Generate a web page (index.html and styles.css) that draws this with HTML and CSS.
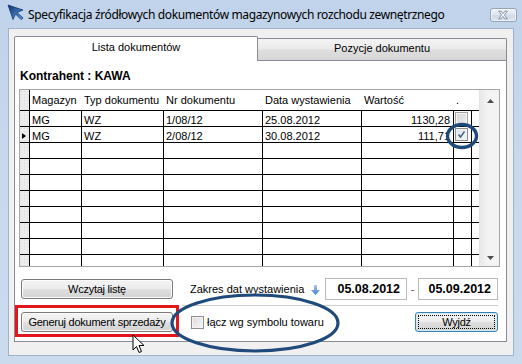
FILE: index.html
```html
<!DOCTYPE html>
<html lang="pl">
<head>
<meta charset="utf-8">
<title>Specyfikacja</title>
<link rel="stylesheet" href="styles.css">
</head>
<body>
<div class="window">
  <div class="titlebar">
    <svg class="app-icon" viewBox="0 0 17 16" width="17" height="16">
      <defs>
        <linearGradient id="ig" x1="0" y1="0" x2="1" y2="1">
          <stop offset="0" stop-color="#0f2f6e"/>
          <stop offset="1" stop-color="#5aa0e0"/>
        </linearGradient>
      </defs>
      <path d="M1 1 L16 6 L10 8.5 L16 14 L14 15.5 L8.5 10 L6 15.5 Z" fill="url(#ig)" stroke="#17386f" stroke-width="0.8"/>
    </svg>
    <span class="title">Specyfikacja źródłowych dokumentów magazynowych rozchodu zewnętrznego</span>
    <div class="close">
      <svg viewBox="0 0 27 14" width="27" height="14">
        <path d="M9 3 L11.5 3 L13.5 5.5 L15.5 3 L18 3 L15 7 L18 11 L15.5 11 L13.5 8.5 L11.5 11 L9 11 L12 7 Z" fill="#f4f7fb" stroke="#7b8796" stroke-width="0.9"/>
      </svg>
    </div>
  </div>
  <div class="client">
    <div class="tabs">
      <div class="tab tab-active">Lista dokumentów</div>
      <div class="tab tab-inactive">Pozycje dokumentu</div>
    </div>
    <div class="panel">
      <div class="kontrahent">Kontrahent : KAWA</div>
      <div class="grid">
        <div class="grid-body">
          <div class="row head">
            <div class="cell ind"></div>
            <div class="cell">Magazyn</div>
            <div class="cell">Typ dokumentu</div>
            <div class="cell">Nr dokumentu</div>
            <div class="cell">Data wystawienia</div>
            <div class="cell">Wartość</div>
            <div class="cell">.</div>
            <div class="cell last"></div>
          </div>
          <div class="row">
            <div class="cell ind"></div>
            <div class="cell">MG</div>
            <div class="cell">WZ</div>
            <div class="cell">1/08/12</div>
            <div class="cell">25.08.2012</div>
            <div class="cell num">1130,28</div>
            <div class="cell chk"><span class="cb cb-gray"></span></div>
            <div class="cell last"></div>
          </div>
          <div class="row">
            <div class="cell ind"><span class="pointer"></span></div>
            <div class="cell">MG</div>
            <div class="cell">WZ</div>
            <div class="cell">2/08/12</div>
            <div class="cell">30.08.2012</div>
            <div class="cell num">111,71</div>
            <div class="cell chk"><span class="cb cb-checked"><svg viewBox="0 0 11 11" width="11" height="11"><path d="M2.5 5.5 L4.5 8 L8.5 2.5" fill="none" stroke="#4a5f7a" stroke-width="1.4"/></svg></span></div>
            <div class="cell last"></div>
          </div>
          <div class="row"><div class="cell ind"></div><div class="cell"></div><div class="cell"></div><div class="cell"></div><div class="cell"></div><div class="cell"></div><div class="cell"></div><div class="cell last"></div></div>
          <div class="row"><div class="cell ind"></div><div class="cell"></div><div class="cell"></div><div class="cell"></div><div class="cell"></div><div class="cell"></div><div class="cell"></div><div class="cell last"></div></div>
          <div class="row"><div class="cell ind"></div><div class="cell"></div><div class="cell"></div><div class="cell"></div><div class="cell"></div><div class="cell"></div><div class="cell"></div><div class="cell last"></div></div>
          <div class="row"><div class="cell ind"></div><div class="cell"></div><div class="cell"></div><div class="cell"></div><div class="cell"></div><div class="cell"></div><div class="cell"></div><div class="cell last"></div></div>
          <div class="row"><div class="cell ind"></div><div class="cell"></div><div class="cell"></div><div class="cell"></div><div class="cell"></div><div class="cell"></div><div class="cell"></div><div class="cell last"></div></div>
          <div class="row"><div class="cell ind"></div><div class="cell"></div><div class="cell"></div><div class="cell"></div><div class="cell"></div><div class="cell"></div><div class="cell"></div><div class="cell last"></div></div>
          <div class="row"><div class="cell ind"></div><div class="cell"></div><div class="cell"></div><div class="cell"></div><div class="cell"></div><div class="cell"></div><div class="cell"></div><div class="cell last"></div></div>
          <div class="row"><div class="cell ind"></div><div class="cell"></div><div class="cell"></div><div class="cell"></div><div class="cell"></div><div class="cell"></div><div class="cell"></div><div class="cell last"></div></div>
        </div>
        <div class="scrollbar">
          <svg class="sb-arrow" viewBox="0 0 7 4" width="7" height="4"><path d="M0 4 L3.5 0 L7 4 Z" fill="#4d4d4d"/></svg>
          <svg class="sb-arrow" viewBox="0 0 7 4" width="7" height="4"><path d="M0 0 L3.5 4 L7 0 Z" fill="#4d4d4d"/></svg>
        </div>
      </div>
      <div class="range-row">
        <div class="btn btn-load">Wczytaj listę</div>
        <div class="range-label">Zakres dat wystawienia</div>
        <svg class="down-arrow" viewBox="0 0 9 10" width="9" height="10">
          <defs>
            <linearGradient id="ag" x1="0" y1="0" x2="0" y2="1">
              <stop offset="0" stop-color="#a9c8ec"/>
              <stop offset="1" stop-color="#3f7fcf"/>
            </linearGradient>
          </defs>
          <path d="M3 0 L6 0 L6 5 L9 5 L4.5 10 L0 5 L3 5 Z" fill="url(#ag)"/>
        </svg>
        <div class="datebox date1">05.08.2012</div>
        <div class="dash">-</div>
        <div class="datebox date2">05.09.2012</div>
      </div>
      <div class="sep"></div>
      <div class="action-row">
        <div class="btn btn-gen">Generuj dokument sprzedaży</div>
        <span class="cb cb-plain"></span>
        <span class="cb-label">łącz wg symbolu towaru</span>
        <div class="btn btn-exit"><span class="focus">Wyjdź</span></div>
      </div>
    </div>
  </div>

  <div class="red-box"></div>
  <svg class="ellipse-big" width="176" height="70" viewBox="0 0 176 70">
    <ellipse cx="88" cy="34" rx="83" ry="28" fill="none" stroke="#1f4a7c" stroke-width="3.2"/>
  </svg>
  <svg class="ellipse-small" width="36" height="30" viewBox="0 0 36 30">
    <ellipse cx="18" cy="15" rx="14.5" ry="11.5" fill="none" stroke="#1f4a7c" stroke-width="3.4"/>
  </svg>
  <svg class="cursor" width="14" height="21" viewBox="0 0 14 21">
    <path d="M1 1 L1 16 L4.5 12.5 L7 18.5 L9.5 17.5 L7 11.5 L12 11.5 Z" fill="#fff" stroke="#000" stroke-width="1" stroke-linejoin="miter"/>
  </svg>
</div>
</body>
</html>
```

FILE: styles.css
```css
* { box-sizing: border-box; }
html, body { margin: 0; padding: 0; }
body {
  width: 522px;
  height: 364px;
  overflow: hidden;
  font-family: "Liberation Sans", Arial, sans-serif;
  font-size: 11px;
  color: #000;
  background: #c4d6ec;
}

.window {
  position: relative;
  width: 522px;
  height: 364px;
  background: linear-gradient(180deg, #c0d3ea 0%, #c7d8ed 40%, #cbdbee 100%);
  display: flex;
  flex-direction: column;
}

/* title bar */
.titlebar {
  height: 28px;
  flex: none;
  display: flex;
  align-items: flex-start;
  padding-left: 7px;
}
.app-icon { flex: none; margin-top: 4px; }
.title {
  font-family: "Noto Sans", "DejaVu Sans", sans-serif;
  font-size: 12px;
  letter-spacing: -0.37px;
  line-height: 16px;
  margin-left: 4px;
  margin-top: 7px;
  white-space: nowrap;
  color: #000;
}
.close {
  margin-left: auto;
  margin-right: 5px;
  margin-top: 8px;
  width: 27px;
  height: 14px;
  border: 1px solid #93a4b8;
  border-radius: 3px;
  background: linear-gradient(180deg, #eef3f9 0%, #dbe5f1 50%, #cfdbea 51%, #d8e3ef 100%);
  box-shadow: inset 0 0 0 1px rgba(255,255,255,0.6);
  display: flex;
}
.close svg { margin: -1px 0 0 -1px; }

/* client */
.client {
  flex: 1;
  margin: 0 8px 8px 8px;
  background: #f0f0f0;
  border: 1px solid #9fb2c8;
  padding: 7px 6px 0 5px;
  display: flex;
  flex-direction: column;
}

.tabs {
  height: 24px;
  display: flex;
  align-items: flex-end;
  flex: none;
}
.tab {
  border: 1px solid #898c95;
  border-bottom: none;
  text-align: center;
  line-height: 14px;
  white-space: nowrap;
}
.tab-active {
  width: 244px;
  height: 25px;
  margin-bottom: -1px;
  padding-top: 3px;
  background: #fff;
  position: relative;
  z-index: 1;
  border-radius: 2px 2px 0 0;
}
.tab-inactive {
  width: 249px;
  height: 22px;
  padding-top: 2px;
  border-left: none;
  border-radius: 0 2px 0 0;
  background: linear-gradient(180deg, #f3f3f3 0%, #ebebeb 45%, #dedede 55%, #d6d6d6 100%);
}

.panel {
  width: 493px;
  height: 282px;
  border: 1px solid #898c95;
  background: #fff;
  padding: 8px 0 0 4px;
  display: flex;
  flex-direction: column;
  flex: none;
}

.kontrahent {
  font-weight: bold;
  font-size: 12px;
  line-height: 14px;
  height: 14px;
  margin-left: 1px;
}

/* grid */
.grid {
  margin-top: 6px;
  width: 481px;
  height: 178px;
  border: 1px solid #a5a5a5;
  display: flex;
  flex: none;
}
.grid-body {
  width: 459px;
  height: 176px;
  overflow: hidden;
}
.row {
  display: grid;
  grid-template-columns: 10px 52px 82px 99px 99px 92px 18px 7px;
  height: 16px;
  border-bottom: 1px solid #000;
}
.row.head { height: 21px; }
.cell {
  border-right: 1px solid #000;
  padding: 2px 0 0 2px;
  line-height: 15px;
  white-space: nowrap;
  overflow: hidden;
}
.cell.last { border-right: none; }
.cell.ind {
  background-color: #ececec;
  background-image: radial-gradient(#dcdcdc 0.6px, transparent 0.7px);
  background-size: 3px 3px;
  padding: 0;
  display: flex;
  align-items: center;
}
.head .cell { border-right: none; padding-top: 0; line-height: 20px; }
.head .cell.ind { border-right: 1px solid #000; }
.cell.num { text-align: right; padding-right: 3px; padding-left: 0; }
.cell.chk { padding: 1px 0 0 1px; }
.pointer {
  width: 0;
  height: 0;
  border-top: 3.5px solid transparent;
  border-bottom: 3.5px solid transparent;
  border-left: 4px solid #000;
  margin: 2px 0 0 2px;
}

.cb {
  display: inline-block;
  width: 13px;
  height: 13px;
  border: 1px solid #8f8f8f;
  flex: none;
}
.cb-gray {
  background: linear-gradient(135deg, #d6d6d6, #ececec);
  border-color: #a3a3a3;
  box-shadow: inset 0 0 0 1px #f3f3f3;
}
.cb-checked {
  background: linear-gradient(135deg, #dbe4ee, #f4f7fa);
  box-shadow: inset 0 0 0 1px #f0f0f0;
}
.cb-checked svg { display: block; margin: 0; }
.cb-plain {
  background: linear-gradient(135deg, #dcdcdc, #f7f7f7);
  box-shadow: inset 0 0 0 1px #f4f4f4;
  margin-left: 18px;
}

.scrollbar {
  width: 20px;
  height: 176px;
  background: linear-gradient(90deg, #e8e8e8 0%, #f3f3f3 40%, #f3f3f3 100%);
  border-left: 1px solid #e4e4e4;
  display: flex;
  flex-direction: column;
  justify-content: space-between;
  align-items: center;
  padding: 9px 0 6px 1px;
}
.sb-arrow { display: block; }

/* range row */
.range-row {
  margin-top: 11px;
  height: 22px;
  display: flex;
  align-items: center;
  flex: none;
}
.btn {
  height: 20px;
  border: 1px solid #7a7a7a;
  border-radius: 3px;
  background: linear-gradient(180deg, #f4f4f4 0%, #ececec 48%, #dfdfdf 52%, #d3d3d3 100%);
  box-shadow: inset 0 0 0 1px #fbfbfb;
  display: flex;
  align-items: center;
  justify-content: center;
  font-size: 11px;
  letter-spacing: -0.25px;
  white-space: nowrap;
  flex: none;
}
.btn-load { margin-left: 2px; width: 152px; }
.range-label { margin-left: 17px; width: 121px; white-space: nowrap; }
.down-arrow { flex: none; margin-top: 1px; }
.datebox {
  height: 22px;
  border: 1px solid #b9b9b9;
  font-weight: bold;
  font-size: 12.5px;
  line-height: 20px;
  text-align: right;
  padding-right: 6px;
  flex: none;
}
.date1 { width: 82px; margin-left: 5px; }
.dash { width: 11px; text-align: center; color: #555; }
.date2 { width: 80px; }

.sep {
  margin-top: 5px;
  margin-left: 163px;
  width: 316px;
  height: 1px;
  background: #cfcfcf;
  flex: none;
}

/* action row */
.action-row {
  margin-top: 6px;
  height: 20px;
  display: flex;
  align-items: center;
  flex: none;
}
.btn-gen { margin-left: 2px; width: 152px; }
.cb-label { margin-left: 3px; white-space: nowrap; }
.btn-exit {
  margin-left: auto;
  margin-right: 8px;
  width: 83px;
  border-color: #3c7fb1;
  box-shadow: inset 0 0 0 1px #cfe9f7;
  padding: 2px;
}
.btn-exit .focus {
  width: 100%;
  height: 100%;
  border: 1px dotted #000;
  display: flex;
  align-items: center;
  justify-content: center;
}

/* annotation overlays */
.red-box {
  position: absolute;
  left: 15px;
  top: 305px;
  width: 164px;
  height: 32px;
  border: 3px solid #e3161c;
}
.ellipse-big { position: absolute; left: 167px; top: 289px; }
.ellipse-small { position: absolute; left: 444px; top: 121px; }
.cursor { position: absolute; left: 132px; top: 334px; }
```
